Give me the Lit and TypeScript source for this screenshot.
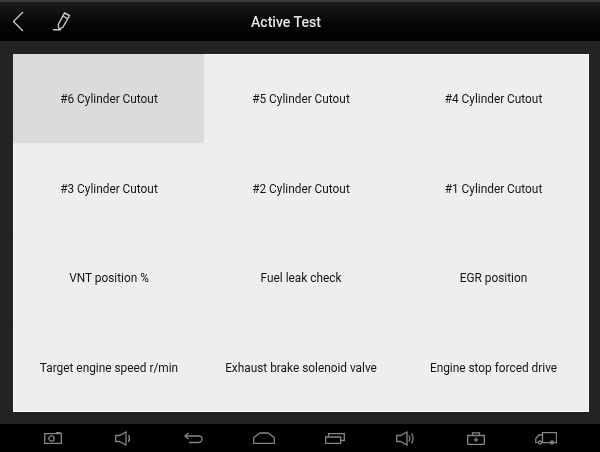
import { LitElement, html, css, svg } from "lit";
import { customElement } from "lit/decorators.js";

const items = [
  "#6 Cylinder Cutout", "#5 Cylinder Cutout", "#4 Cylinder Cutout",
  "#3 Cylinder Cutout", "#2 Cylinder Cutout", "#1 Cylinder Cutout",
  "VNT position %", "Fuel leak check", "EGR position",
  "Target engine speed r/min", "Exhaust brake solenoid valve", "Engine stop forced drive",
];

const navIcons = [
  svg`<svg width="18" height="12" viewBox="0 0 18 12"><path d="M.7 1.700h16.600v9.600H.7z"/><circle cx="7.500" cy="6.500" r="2.700"/><path d="M12.500 1.700V.6h3.500v1.100"/></svg>`,
  svg`<svg width="17" height="15" viewBox="0 0 17 15"><path d="M.7 4.500h3.800L11 1v13l-6.500-3.500H.7z"/><path d="M13.500 4q2 3.500 0 7"/></svg>`,
  svg`<svg width="19" height="12" viewBox="0 0 19 12"><path d="M4.500 1L1 4l3.500 3"/><path d="M1 4h13.500q3.500 0 3.500 3t-3.500 3.500H5"/></svg>`,
  svg`<svg width="22" height="12" viewBox="0 0 22 12"><path d="M.7 5.500L7 1h8l6.300 4.500v5.800H.7z"/></svg>`,
  svg`<svg width="20" height="12" viewBox="0 0 20 12"><path d="M.7 5h15v6.300H.7z"/><path d="M3.500 4.500V1.700h15.800v6.800H16"/></svg>`,
  svg`<svg width="19" height="15" viewBox="0 0 19 15"><path d="M.7 4.500h3.800L11 1v13l-6.500-3.500H.7z"/><path d="M13 4.500q1.500 3 0 6M15.500 2.500q3 5 0 10"/></svg>`,
  svg`<svg width="18" height="13" viewBox="0 0 18 13"><path d="M.7 3.500h16.600v9H.7z"/><path d="M5.500 3.500V.8h7v2.700M9 5.500v4.500M6.800 7.800h4.400"/></svg>`,
  svg`<svg width="22" height="13" viewBox="0 0 22 13"><path d="M7.500.7h14v10h-14z"/><path d="M7.500 3H4L.8 6.500v4.200h2"/><circle cx="5" cy="10.500" r="1.500"/><circle cx="17" cy="10.500" r="1.500"/></svg>`,
];

@customElement("app-root")
export class AppRoot extends LitElement {
  static styles = css`
    :host {
      display: flex;
      flex-direction: column;
      width: 600px;
      height: 452px;
      background: #232323;
      font-family: Roboto, "Liberation Sans", sans-serif;
      overflow: hidden;
    }
    .header {
      flex: 0 0 41px;
      box-sizing: border-box;
      border-top: 2px solid #3a3a3a;
      background: linear-gradient(#1c1c1c, #050505 55%, #000);
      position: relative;
      display: flex;
      align-items: center;
      justify-content: center;
      padding-right: 28px;
      color: #e6e6e6;
      font-size: 14.100px;
      font-weight: 500;
    }
    .title {
      filter: blur(0.4px);
    }
    .tools {
      position: absolute;
      left: 12px;
      top: 9px;
      display: flex;
      gap: 28px;
      align-items: center;
    }
    .tools svg {
      fill: none;
      stroke: #c8c8c8;
      stroke-width: 1.400;
      display: block;
    }
    .main {
      flex: 1;
      padding: 13px 11px 12px 13px;
      display: flex;
      min-height: 0;
    }
    .grid {
      flex: 1;
      display: grid;
      grid-template-columns: repeat(3, 1fr);
      grid-template-rows: repeat(4, 1fr);
      background: #eeeeee;
      box-shadow: inset 0 0 0 1px #fafafa;
    }
    .cell {
      display: flex;
      align-items: center;
      justify-content: center;
      font-size: 11.850px;
      color: #151515;
      padding: 2px 0 0 1px;
      box-sizing: border-box;
      border-right: 1px solid #eaeaea;
      border-bottom: 1px solid #eaeaea;
    }
    .cell span {
      filter: blur(0.3px);
    }
    .cell:nth-child(3n) { border-right: 0; }
    .cell:nth-last-child(-n + 3) { border-bottom: 0; }
    .cell.on { background: #dbdbdb; }
    .nav {
      flex: 0 0 28px;
      background: #000;
      display: flex;
      align-items: center;
      padding-left: 18px;
      box-sizing: border-box;
    }
    .nav-slot {
      flex: 0 0 70.400px;
      display: flex;
      justify-content: center;
    }
    .nav svg {
      fill: none;
      stroke: #858585;
      stroke-width: 1.300;
      display: block;
    }
  `;

  render() {
    return html`
      <div class="header">
        <div class="tools">
          <svg width="12" height="21" viewBox="0 0 12 21"><path d="M11 1L1.500 10.500 11 20"/></svg>
          <svg width="19" height="19" viewBox="0 0 19 19"><path d="M12.500 1l5 2.500-6.500 11.500-4 2.500-.8-4.800zM11 4l5 2.800M1 17.800h8"/></svg>
        </div>
        <span class="title">Active Test</span>
      </div>
      <div class="main">
        <div class="grid">
          ${items.map((t, i) => html`<div class="cell ${i === 0 ? "on" : ""}"><span>${t}</span></div>`)}
        </div>
      </div>
      <div class="nav">
        ${navIcons.map((ic) => html`<div class="nav-slot">${ic}</div>`)}
      </div>
    `;
  }
}
